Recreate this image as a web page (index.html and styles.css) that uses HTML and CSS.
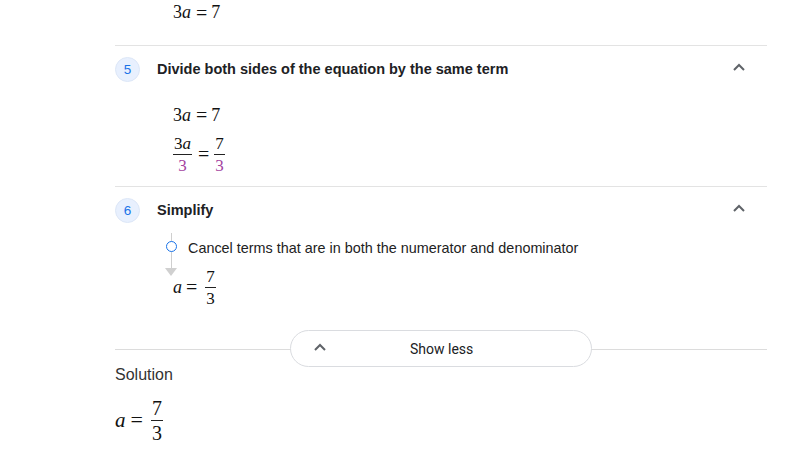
FILE: index.html
```html
<!DOCTYPE html>
<html>
<head>
<meta charset="utf-8">
<link rel="stylesheet" href="styles.css">
</head>
<body>
<div class="page">
  <div class="eq eq-top"><span class="n">3</span><i>a</i><span class="op">=</span><span class="n">7</span></div>

  <section class="step">
    <div class="step-head">
      <span class="num">5</span>
      <span class="title">Divide both sides of the equation by the same term</span>
      <svg class="chev" width="14" height="10" viewBox="0 0 14 10"><path d="M2 8 L7 3 L12 8" fill="none" stroke="#5f6368" stroke-width="2"/></svg>
    </div>
    <div class="step-body">
      <div class="eq eq-line"><span class="n">3</span><i>a</i><span class="op">=</span><span class="n">7</span></div>
      <div class="eq eq-frac">
        <span class="frac"><span class="fn">3<i>a</i></span><span class="fd hl">3</span></span>
        <span class="op">=</span>
        <span class="frac"><span class="fn">7</span><span class="fd hl">3</span></span>
      </div>
    </div>
  </section>

  <section class="step">
    <div class="step-head">
      <span class="num">6</span>
      <span class="title">Simplify</span>
      <svg class="chev" width="14" height="10" viewBox="0 0 14 10"><path d="M2 8 L7 3 L12 8" fill="none" stroke="#5f6368" stroke-width="2"/></svg>
    </div>
    <div class="step-body simp">
      <div class="substep">
        <div class="rail">
          <span class="dot"></span>
          <span class="arrow"></span>
        </div>
        <span class="subtext">Cancel terms that are in both the numerator and denominator</span>
      </div>
      <div class="eq eq-res"><i>a</i><span class="op">=</span><span class="frac"><span class="fn">7</span><span class="fd">3</span></span></div>
    </div>
  </section>

  <div class="less-row">
    <button class="less">
      <svg class="chev-btn" width="14" height="10" viewBox="0 0 14 10"><path d="M2 8 L7 3 L12 8" fill="none" stroke="#5f6368" stroke-width="2"/></svg>
      <span>Show less</span>
    </button>
  </div>

  <div class="solution">
    <div class="sol-title">Solution</div>
    <div class="eq eq-sol"><i>a</i><span class="op">=</span><span class="frac"><span class="fn">7</span><span class="fd">3</span></span></div>
  </div>
</div>
</body>
</html>
```

FILE: styles.css
```css
* { box-sizing: border-box; }
html, body { margin: 0; padding: 0; background: #fff; }
body {
  font-family: "Liberation Sans", Arial, sans-serif;
  color: #202124;
  width: 788px;
  height: 454px;
  overflow: hidden;
}
.page {
  padding: 0 21px 0 115px;
}
.eq {
  font-family: "Liberation Serif", "Times New Roman", serif;
  font-size: 18px;
  color: #111;
  display: flex;
  align-items: center;
}
.eq i { font-style: italic; }
.eq .op { margin: 0 4px 0 5px; font-size: 20px; line-height: 18px; }
.eq-top {
  height: 25px;
  padding-left: 58px;
  margin-bottom: 20px;
}
.step {
  border-top: 1px solid #e3e3e3;
}
.step-head {
  display: flex;
  align-items: center;
  height: 46px;
}
.num {
  width: 25px;
  height: 25px;
  border-radius: 50%;
  background: #e8f0fe;
  border: 1px solid #dde7f7;
  color: #1a73e8;
  font-size: 13.5px;
  display: flex;
  align-items: center;
  justify-content: center;
  flex: none;
}
.title {
  margin-left: 17px;
  font-weight: bold;
  font-size: 14.5px;
  color: #202124;
  flex: 1;
}
.chev {
  margin-right: 21px;
  margin-top: -5px;
}
.step-body {
  padding-left: 58px;
  padding-bottom: 12px;
}
.eq-line { height: 24px; margin-top: 11px; }
.eq-frac { margin-top: 7px; height: 40px; }
.eq-frac .op { margin: 0 5px 0 6px; }
.frac {
  display: inline-flex;
  flex-direction: column;
  align-items: center;
  font-size: 17px;
  line-height: 17px;
}
.fn {
  padding: 0 1px 2px;
  border-bottom: 1px solid #222;
}
.fd { padding-top: 2px; }
.hl { color: #a4449f; }
.simp { padding-bottom: 0; }
.substep {
  display: flex;
  align-items: flex-start;
  margin-left: -8px;
  height: 38px;
}
.rail {
  width: 12px;
  height: 44px;
  position: relative;
  display: flex;
  flex-direction: column;
  align-items: center;
  flex: none;
}
.rail::before {
  content: "";
  position: absolute;
  left: 5.5px;
  top: 0;
  width: 1px;
  height: 37px;
  background: #cfcfcf;
}
.dot {
  position: relative;
  margin-top: 8px;
  width: 11px;
  height: 11px;
  border-radius: 50%;
  border: 1.3px solid #1a73e8;
  background: #fff;
}
.arrow {
  position: relative;
  margin-top: 16px;
  width: 0; height: 0;
  border-left: 6px solid transparent;
  border-right: 6px solid transparent;
  border-top: 8px solid #d0d0d0;
}
.subtext {
  margin-left: 11px;
  margin-top: 7px;
  font-size: 14.4px;
  color: #222;
}
.eq-res { height: 38px; margin-top: -3px; }
.eq-res .op { margin: 0 8px 0 4px; }
.less-row {
  margin-top: 24px;
  display: flex;
  justify-content: center;
  align-items: center;
  height: 37px;
  position: relative;
}
.less-row::before {
  content: "";
  position: absolute;
  left: 0; right: 0;
  top: 19px;
  height: 1px;
  background: #dcdcdc;
}
.less {
  position: relative;
  width: 302px;
  height: 37px;
  border: 1px solid #dadce0;
  border-radius: 19px;
  background: #fff;
  font-family: Roboto, "Liberation Sans", sans-serif;
  font-size: 14px;
  color: #202124;
  display: flex;
  align-items: center;
  padding: 0 0 0 22px;
}
.less span { margin-left: 83px; }
.chev-btn { margin-top: -3px; }
.solution { margin-top: -1px; }
.sol-title {
  font-size: 16px;
  color: #333;
  height: 24px;
}
.eq-sol {
  font-size: 21px;
  height: 50px;
  margin-top: 5px;
}
.eq-sol .frac { font-size: 20px; line-height: 20px; }
.eq-sol .op { margin: 0 8px 0 5px; font-size: 22px; line-height: 20px; }
```
